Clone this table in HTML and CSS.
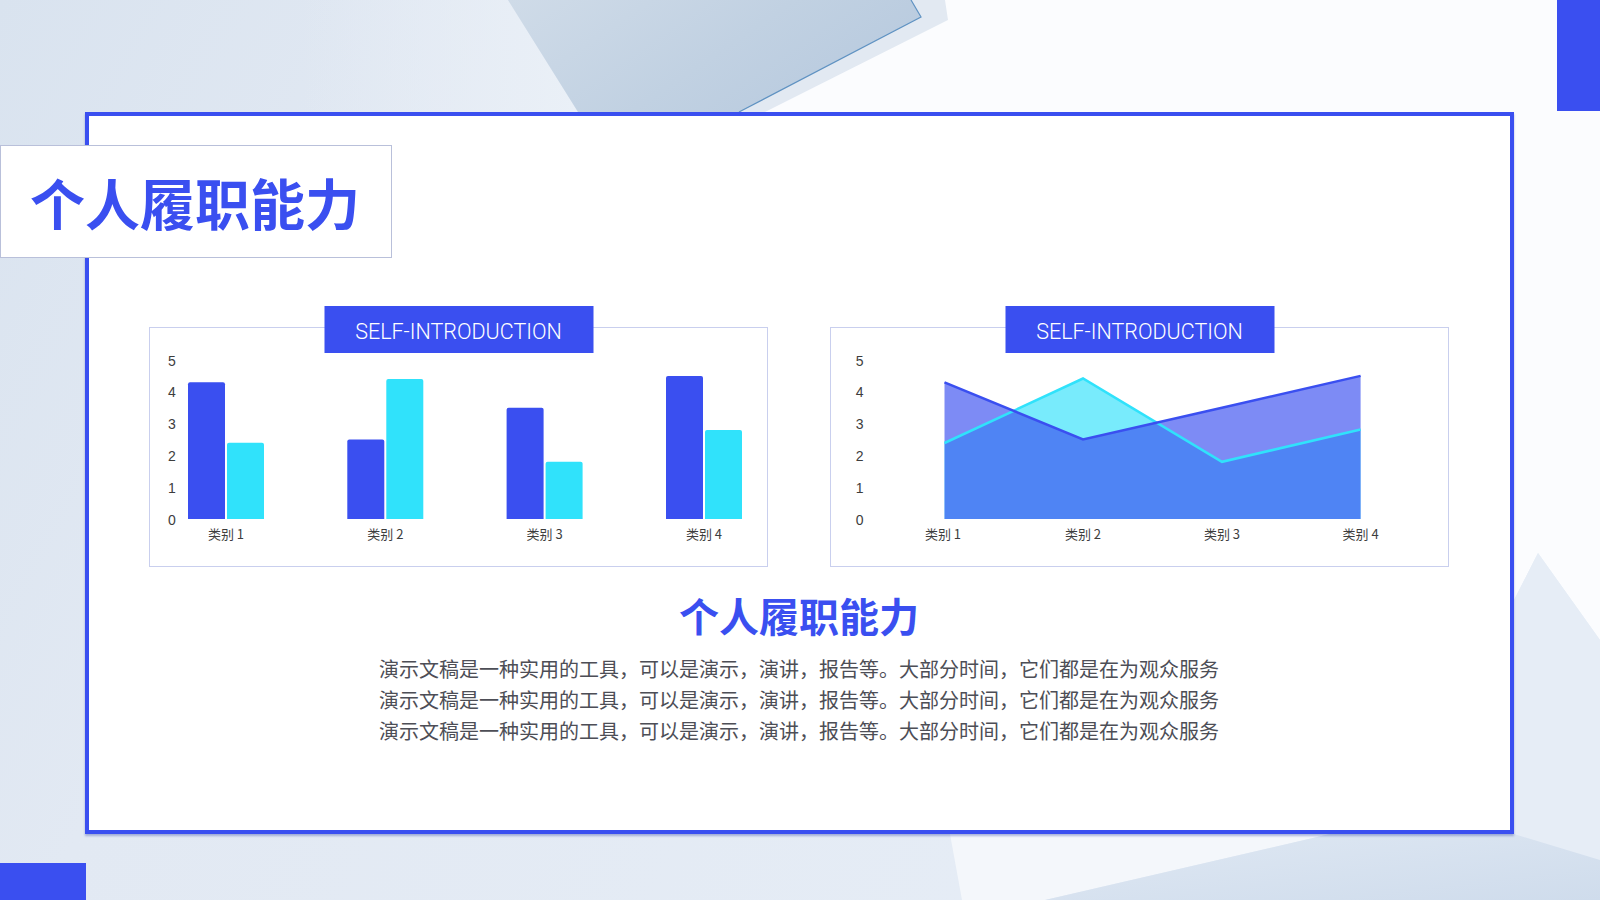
FILE: index.html
```html
<!DOCTYPE html>
<html lang="zh-CN">
<head>
<meta charset="utf-8">
<title>个人履职能力</title>
<link rel="stylesheet" href="styles.css">
</head>
<body>
<div class="slide">
  <svg class="bg" viewBox="0 0 1600 900" preserveAspectRatio="none" aria-hidden="true">
    <defs>
      <linearGradient id="gBase" x1="0" y1="0" x2="1" y2="0.3">
        <stop offset="0" stop-color="#d9e3ef"/>
        <stop offset="0.3" stop-color="#e2e9f3"/>
        <stop offset="1" stop-color="#e6edf6"/>
      </linearGradient>
      <linearGradient id="gTop" x1="0" y1="0" x2="1" y2="0">
        <stop offset="0" stop-color="#e8eef6" stop-opacity="0"/>
        <stop offset="1" stop-color="#eaf0f7" stop-opacity="1"/>
      </linearGradient>
      <linearGradient id="gGlass" x1="0" y1="0" x2="1" y2="0.4">
        <stop offset="0" stop-color="#cfdbe8"/>
        <stop offset="0.6" stop-color="#c1d1e2"/>
        <stop offset="1" stop-color="#b9cbdf"/>
      </linearGradient>
      <linearGradient id="gBottom" x1="0" y1="0" x2="1" y2="1">
        <stop offset="0" stop-color="#dfe8f3"/>
        <stop offset="1" stop-color="#cfdcec"/>
      </linearGradient>
    </defs>
    <rect x="0" y="0" width="1600" height="900" fill="url(#gBase)"/>
    <polygon points="300,0 508,0 578,112 300,112" fill="url(#gTop)"/>
    <polygon points="508,0 911,0 921,17 739,112 578,112" fill="url(#gGlass)"/>
    <polygon points="911,0 945,0 948,20 765,112 739,112 921,17" fill="#e2e9f2"/>
    <polyline points="911,0 921,17 739,112" fill="none" stroke="#5f92c2" stroke-width="1.2"/>
    <polygon points="945,0 1600,0 1600,640 1538,553 1514,600 1514,112 765,112 948,20" fill="#fbfcfe"/>
    <polygon points="1538,553 1600,640 1600,900 1514,900 1514,600" fill="#e6edf6"/>
    <polygon points="950,834 1330,834 1045,900 962,900" fill="#f4f7fb"/>
    <polygon points="1330,834 1514,834 1600,860 1600,900 1045,900" fill="url(#gBottom)"/>
  </svg>

  <div class="corner corner-tr"></div>
  <div class="corner corner-bl"></div>

  <main class="frame">
    <div class="charts">
      <section class="chart-card">
        <div class="tab">SELF-INTRODUCTION</div>
        <svg class="chart" viewBox="1 1 617 238">
          <g class="axis">
            <text x="23" y="39">5</text>
            <text x="23" y="70">4</text>
            <text x="23" y="102">3</text>
            <text x="23" y="134">2</text>
            <text x="23" y="166">1</text>
            <text x="23" y="198">0</text>
          </g>
          <g class="dark">
            <rect x="39" y="55.3" width="37" height="138.7" rx="2"/>
            <rect x="198.3" y="112.5" width="37" height="81.5" rx="2"/>
            <rect x="357.6" y="80.7" width="37" height="113.3" rx="2"/>
            <rect x="517" y="48.9" width="37" height="145.1" rx="2"/>
          </g>
          <g class="light">
            <rect x="78" y="115.7" width="37" height="78.3" rx="2"/>
            <rect x="237.3" y="52.1" width="37" height="141.9" rx="2"/>
            <rect x="396.6" y="134.8" width="37" height="59.2" rx="2"/>
            <rect x="556" y="103" width="37" height="91" rx="2"/>
          </g>
          <rect x="30" y="192" width="580" height="10" fill="#fff"/>
          <g class="cat">
            <text x="77" y="212">类别 1</text>
            <text x="236.3" y="212">类别 2</text>
            <text x="395.6" y="212">类别 3</text>
            <text x="555" y="212">类别 4</text>
          </g>
        </svg>
      </section>

      <section class="chart-card">
        <div class="tab">SELF-INTRODUCTION</div>
        <svg class="chart" viewBox="1 1 617 238">
          <g class="axis">
            <text x="29.6" y="39">5</text>
            <text x="29.6" y="70">4</text>
            <text x="29.6" y="102">3</text>
            <text x="29.6" y="134">2</text>
            <text x="29.6" y="166">1</text>
            <text x="29.6" y="198">0</text>
          </g>
          <polygon class="area-light" points="114.5,192 114.5,116 253,51.5 392,134.8 530.6,102.5 530.6,192"/>
          <polygon class="area-dark" points="114.5,192 114.5,55.3 253,112.5 392,80.7 530.6,48.9 530.6,192"/>
          <polyline class="line-light" points="114.5,116 253,51.5 392,134.8 530.6,102.5"/>
          <polyline class="line-dark" points="114.5,55.3 253,112.5 392,80.7 530.6,48.9"/>
          <g class="cat">
            <text x="113" y="212">类别 1</text>
            <text x="253" y="212">类别 2</text>
            <text x="392" y="212">类别 3</text>
            <text x="530.6" y="212">类别 4</text>
          </g>
        </svg>
      </section>
    </div>

    <h2 class="heading">个人履职能力</h2>
    <div class="desc">
      <p>演示文稿是一种实用的工具，可以是演示，演讲，报告等。大部分时间，它们都是在为观众服务</p>
      <p>演示文稿是一种实用的工具，可以是演示，演讲，报告等。大部分时间，它们都是在为观众服务</p>
      <p>演示文稿是一种实用的工具，可以是演示，演讲，报告等。大部分时间，它们都是在为观众服务</p>
    </div>
  </main>

  <div class="title-box">
    <h1 class="title">个人履职能力</h1>
  </div>
</div>
</body>
</html>
```

FILE: styles.css
```css
* {
  box-sizing: border-box;
}

html, body {
  margin: 0;
  padding: 0;
}

body {
  width: 1600px;
  height: 900px;
  overflow: hidden;
  font-family: "Noto Sans CJK SC", "Noto Sans", sans-serif;
  background: #e3eaf4;
}

.slide {
  position: relative;
  width: 1600px;
  height: 900px;
  overflow: hidden;
  padding: 112px 86px 66px 85px;
}

.bg {
  position: absolute;
  left: 0;
  top: 0;
  width: 1600px;
  height: 900px;
  z-index: 0;
}

.corner {
  position: absolute;
  background: #3a4ff0;
  z-index: 2;
}

.corner-tr {
  right: 0;
  top: 0;
  width: 43px;
  height: 111px;
}

.corner-bl {
  left: 0;
  bottom: 0;
  width: 86px;
  height: 37px;
}

.frame {
  position: relative;
  z-index: 1;
  width: 1429px;
  height: 722px;
  background: #ffffff;
  border: 4px solid #3a4ff0;
  box-shadow: 0 2px 2px rgba(40, 60, 160, 0.35);
  padding: 190px 61px 0 60px;
  display: flex;
  flex-direction: column;
  align-items: center;
}

.charts {
  display: grid;
  grid-template-columns: 619px 619px;
  column-gap: 62px;
  width: 100%;
}

.chart-card {
  position: relative;
  margin-top: 21px;
  height: 240px;
  border: 1px solid #c9cfee;
  background: #ffffff;
}

.tab {
  position: absolute;
  top: -22px;
  left: 50%;
  transform: translateX(-50%);
  width: 269px;
  height: 47px;
  padding-top: 4px;
  background: #3a4ff0;
  color: #ffffff;
  font-family: Roboto, "Liberation Sans", sans-serif;
  font-weight: 300;
  font-size: 21.5px;
  display: flex;
  align-items: center;
  justify-content: center;
  letter-spacing: 0;
}

.chart {
  display: block;
  width: 617px;
  height: 238px;
}

.axis text {
  font-family: "Liberation Sans", Arial, sans-serif;
  font-size: 14px;
  fill: #3d3d3d;
  text-anchor: middle;
}

.cat text {
  font-family: "Noto Sans CJK SC", sans-serif;
  font-size: 13px;
  fill: #3d3d3d;
  text-anchor: middle;
}

.dark rect {
  fill: #3a4ff0;
}

.light rect {
  fill: #30e2fb;
}

.area-light {
  fill: rgba(47, 224, 251, 0.65);
}

.area-dark {
  fill: rgba(58, 79, 240, 0.66);
}

.line-light {
  fill: none;
  stroke: #30e2fb;
  stroke-width: 2.5;
  stroke-linejoin: miter;
}

.line-dark {
  fill: none;
  stroke: #3a4ff0;
  stroke-width: 2.5;
  stroke-linejoin: miter;
}

.heading {
  margin: 24px 0 0 0;
  font-size: 40px;
  line-height: 48px;
  font-weight: 700;
  color: #3a4ff0;
  text-align: center;
}

.desc {
  margin-top: 14px;
  text-align: center;
}

.desc p {
  margin: 0;
  font-size: 20px;
  line-height: 31px;
  color: #4d4e56;
  white-space: nowrap;
}

.title-box {
  position: absolute;
  left: 0;
  top: 145px;
  width: 392px;
  height: 113px;
  z-index: 3;
  background: #ffffff;
  border: 1px solid #b9c0da;
  display: flex;
  align-items: center;
  padding-left: 29px;
}

.title {
  margin: 0;
  font-size: 55px;
  line-height: 1;
  font-weight: 700;
  color: #3a4ff0;
  white-space: nowrap;
}
```
